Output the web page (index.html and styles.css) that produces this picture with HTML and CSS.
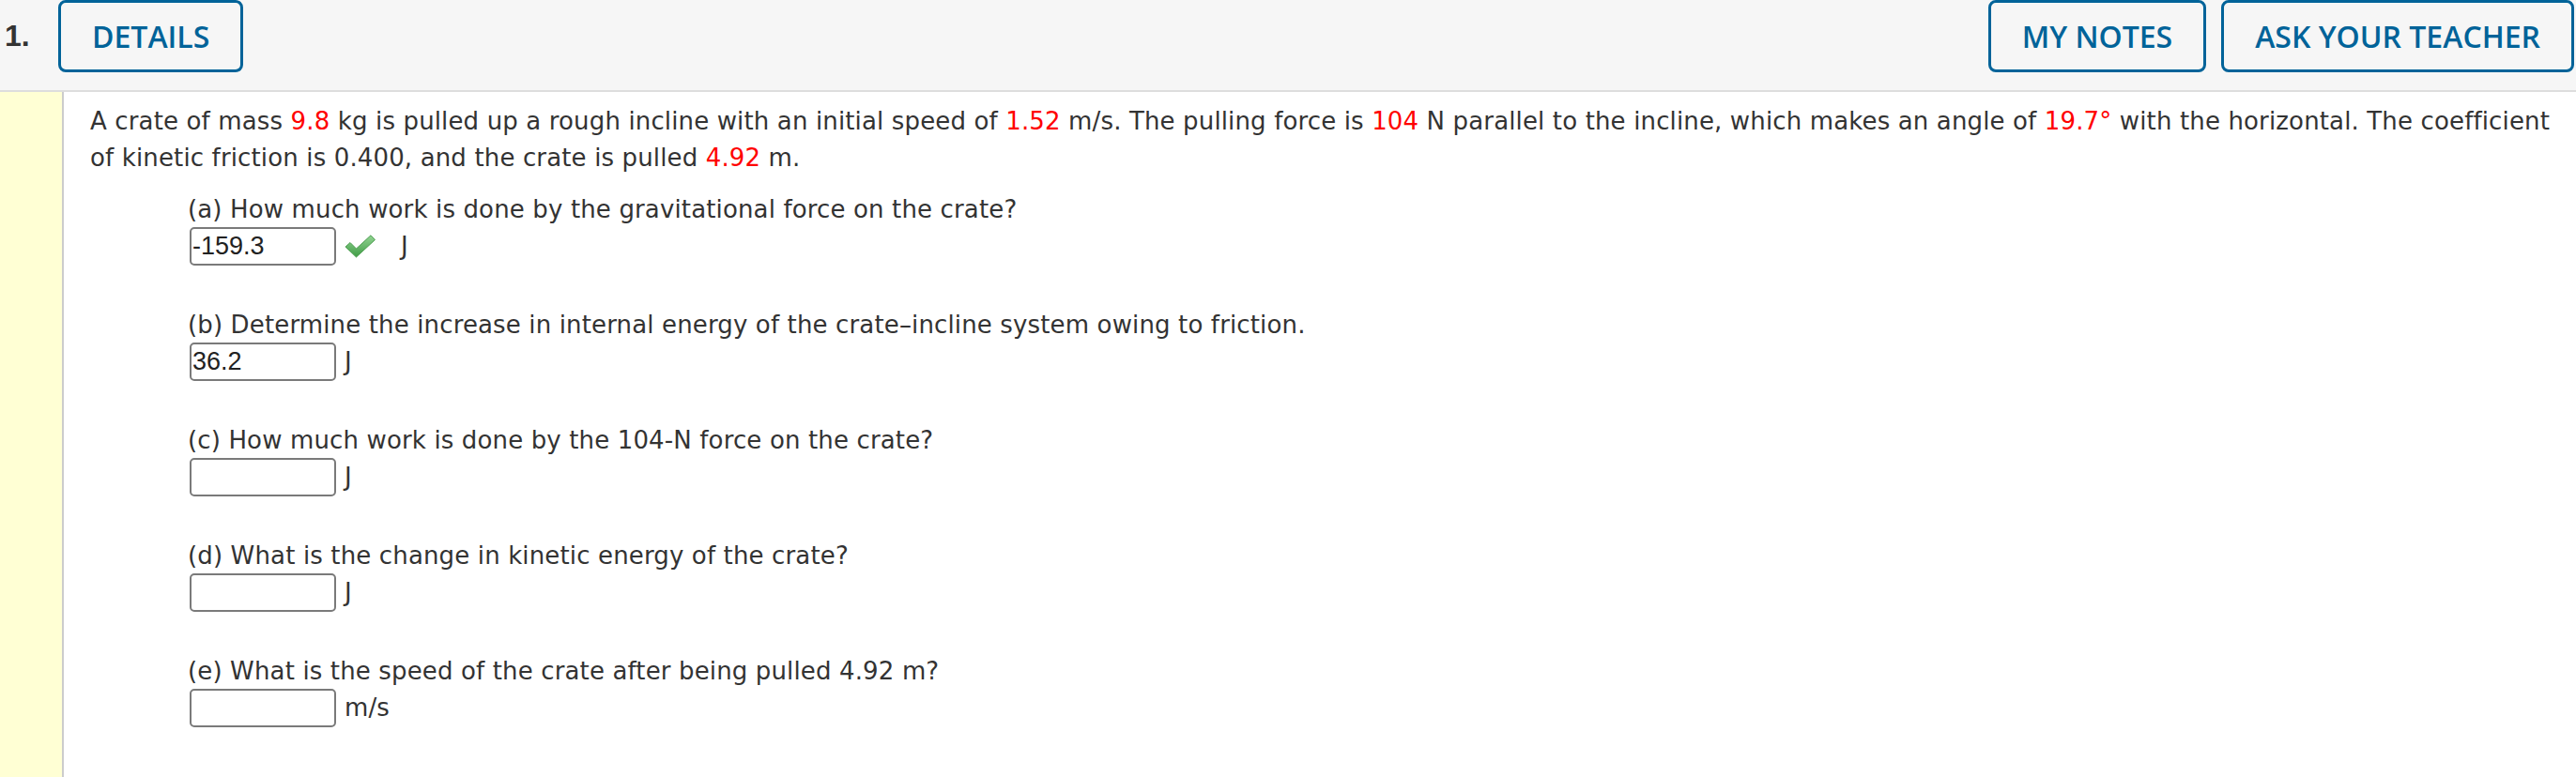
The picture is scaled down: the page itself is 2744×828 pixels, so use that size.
FILE: index.html
```html
<!DOCTYPE html>
<html lang="en">
<head>
<meta charset="utf-8">
<title>Question 1</title>
<link rel="stylesheet" href="styles.css">
</head>
<body>
<div class="question">
  <header class="qhead">
    <div class="qnum">1.</div>
    <button class="btn">DETAILS</button>
    <div class="spacer"></div>
    <button class="btn">MY NOTES</button>
    <button class="btn">ASK YOUR TEACHER</button>
  </header>
  <div class="qbody">
    <div class="strip"></div>
    <div class="content">
      <p class="stem">A crate of mass <span class="val">9.8</span> kg is pulled up a rough incline with an initial speed of <span class="val">1.52</span> m/s. The pulling force is <span class="val">104</span> N parallel to the incline, which makes an angle of <span class="val">19.7°</span> with the horizontal. The coefficient of kinetic friction is 0.400, and the crate is pulled <span class="val">4.92</span> m.</p>
      <div class="parts">
        <div class="part">
          <div class="ptext">(a) How much work is done by the gravitational force on the crate?</div>
          <div class="answer">
            <input class="box" type="text" value="-159.3">
            <svg class="check" width="33" height="25" viewBox="0 0 33 25">
              <defs>
                <linearGradient id="g" x1="0" y1="0" x2="0" y2="1">
                  <stop offset="0" stop-color="#93d493"/>
                  <stop offset="1" stop-color="#3f9c45"/>
                </linearGradient>
              </defs>
              <polygon points="1,13 6,8.5 12.5,15 28,0.8 32.5,5.5 12.5,24" fill="url(#g)" stroke="#4e9e52" stroke-width="1" stroke-linejoin="round"/>
            </svg>
            <span class="unit unit-after-check">J</span>
          </div>
        </div>
        <div class="part">
          <div class="ptext">(b) Determine the increase in internal energy of the crate–incline system owing to friction.</div>
          <div class="answer">
            <input class="box" type="text" value="36.2">
            <span class="unit">J</span>
          </div>
        </div>
        <div class="part">
          <div class="ptext">(c) How much work is done by the 104-N force on the crate?</div>
          <div class="answer">
            <input class="box" type="text" value="">
            <span class="unit">J</span>
          </div>
        </div>
        <div class="part">
          <div class="ptext">(d) What is the change in kinetic energy of the crate?</div>
          <div class="answer">
            <input class="box" type="text" value="">
            <span class="unit">J</span>
          </div>
        </div>
        <div class="part">
          <div class="ptext">(e) What is the speed of the crate after being pulled 4.92 m?</div>
          <div class="answer">
            <input class="box" type="text" value="">
            <span class="unit">m/s</span>
          </div>
        </div>
      </div>
    </div>
  </div>
</div>
</body>
</html>
```
FILE: styles.css
```css
html, body {
  margin: 0;
  padding: 0;
  background: #ffffff;
}

body {
  font-family: "DejaVu Sans", Verdana, sans-serif;
  color: #333333;
  height: 828px;
  overflow: hidden;
}

.question {
  display: flex;
  flex-direction: column;
  height: 828px;
}

.qhead {
  display: flex;
  align-items: flex-start;
  height: 96px;
  background: #f6f6f6;
  border-bottom: 2px solid #dddddd;
  padding: 0 2px 0 5px;
  flex: none;
}

.qnum {
  font-family: "Liberation Sans", Arial, sans-serif;
  font-weight: bold;
  font-size: 32px;
  line-height: 77px;
  color: #333333;
  width: 57px;
}

.btn {
  height: 77px;
  box-sizing: border-box;
  border: 3px solid #006399;
  border-radius: 8px;
  background: #f6f6f6;
  color: #006399;
  font-family: "Open Sans", sans-serif;
  font-weight: 600;
  font-size: 32px;
  padding: 0 33px;
  margin: 0;
  line-height: 1;
}

.btn + .btn {
  margin-left: 16px;
}

.spacer {
  flex: 1;
}

.qbody {
  display: flex;
  flex: 1;
}

.strip {
  width: 66px;
  background: #ffffd4;
  border-right: 2px solid #cccccc;
  flex: none;
}

.content {
  flex: 1;
  padding: 12px 20px 0 28px;
  font-size: 26px;
  line-height: 39px;
  letter-spacing: 0.14px;
}

.stem {
  margin: 0;
}

.val {
  color: #ff0000;
}

.parts {
  margin-top: 15px;
  padding-left: 104px;
  display: flex;
  flex-direction: column;
  gap: 43px;
}

.ptext {
  padding-top: 1px;
  line-height: 38px;
}

.answer {
  display: flex;
  align-items: center;
  height: 41px;
}

.box {
  box-sizing: border-box;
  width: 156px;
  height: 41px;
  margin: 0 0 0 2px;
  border: 2px solid #7a7a7a;
  border-radius: 5px;
  padding: 0 1px;
  font-family: "Liberation Sans", Arial, sans-serif;
  font-size: 27px;
  letter-spacing: 0;
  color: #222222;
  background: #ffffff;
  outline: none;
}

.check {
  margin-left: 9px;
  flex: none;
}

.unit {
  margin-left: 9px;
  line-height: 41px;
}

.unit-after-check {
  margin-left: 27px;
}
```
